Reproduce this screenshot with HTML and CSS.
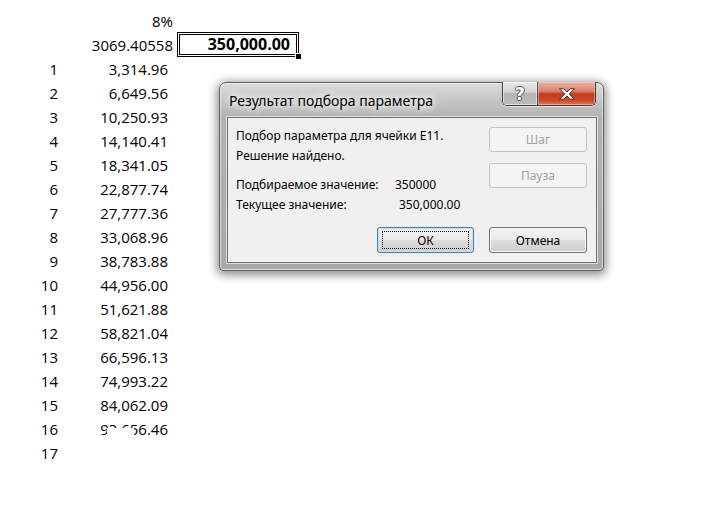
FILE: index.html
```html
<!DOCTYPE html>
<html lang="ru">
<head>
<meta charset="utf-8">
<title>Подбор параметра</title>
<link rel="stylesheet" href="styles.css">
</head>
<body>
<div class="sheet">
  <div class="row"><div class="c a"></div><div class="c b">8%</div><div class="c cc"></div></div>
  <div class="row"><div class="c a"></div><div class="c b">3069.40558</div><div class="c cc"><div class="active">350,000.00<span class="handle"></span></div></div></div>
  <div class="row"><div class="c a">1</div><div class="c b f">3,314.96</div><div class="c cc"></div></div>
  <div class="row"><div class="c a">2</div><div class="c b f">6,649.56</div><div class="c cc"></div></div>
  <div class="row"><div class="c a">3</div><div class="c b f">10,250.93</div><div class="c cc"></div></div>
  <div class="row"><div class="c a">4</div><div class="c b f">14,140.41</div><div class="c cc"></div></div>
  <div class="row"><div class="c a">5</div><div class="c b f">18,341.05</div><div class="c cc"></div></div>
  <div class="row"><div class="c a">6</div><div class="c b f">22,877.74</div><div class="c cc"></div></div>
  <div class="row"><div class="c a">7</div><div class="c b f">27,777.36</div><div class="c cc"></div></div>
  <div class="row"><div class="c a">8</div><div class="c b f">33,068.96</div><div class="c cc"></div></div>
  <div class="row"><div class="c a">9</div><div class="c b f">38,783.88</div><div class="c cc"></div></div>
  <div class="row"><div class="c a">10</div><div class="c b f">44,956.00</div><div class="c cc"></div></div>
  <div class="row"><div class="c a">11</div><div class="c b f">51,621.88</div><div class="c cc"></div></div>
  <div class="row"><div class="c a">12</div><div class="c b f">58,821.04</div><div class="c cc"></div></div>
  <div class="row"><div class="c a">13</div><div class="c b f">66,596.13</div><div class="c cc"></div></div>
  <div class="row"><div class="c a">14</div><div class="c b f">74,993.22</div><div class="c cc"></div></div>
  <div class="row"><div class="c a">15</div><div class="c b f">84,062.09</div><div class="c cc"></div></div>
  <div class="row"><div class="c a">16</div><div class="c b f glitch">93,656.46<span class="erase"></span></div><div class="c cc"></div></div>
  <div class="row"><div class="c a">17</div><div class="c b f"></div><div class="c cc"></div></div>
</div>

<div class="dialog">
  <div class="titlebar">
    <span class="title">Результат подбора параметра</span>
    <div class="capbtns">
      <span class="cap help">?</span>
      <span class="cap close">
        <svg width="18" height="12" viewBox="0 0 18 12"><path d="M1.5 0.8h4.2l3.3 3.2 3.3-3.2h4.2l-5.3 5.2 5.3 5.2h-4.2l-3.3-3.2-3.3 3.2h-4.2l5.3-5.2z" fill="#fff" stroke="#4a2a22" stroke-width="1" stroke-linejoin="round"/></svg>
      </span>
    </div>
  </div>
  <div class="client">
    <div class="info">
      <div class="line">Подбор параметра для ячейки E11.</div>
      <div class="line">Решение найдено.</div>
      <div class="line gap"><span class="lbl">Подбираемое значение:</span><span class="val">350000</span></div>
      <div class="line"><span class="lbl">Текущее значение:</span><span class="val v2">350,000.00</span></div>
    </div>
    <div class="side">
      <span class="btn disabled">Шаг</span>
      <span class="btn disabled">Пауза</span>
    </div>
    <div class="actions">
      <span class="btn default"><span class="focus">ОК</span></span>
      <span class="btn">Отмена</span>
    </div>
  </div>
</div>
</body>
</html>
```

FILE: styles.css
```css
html, body {
  margin: 0;
  padding: 0;
  background: #ffffff;
}
body {
  font-family: "Open Sans", "Liberation Sans", sans-serif;
  font-size: 15px;
  color: #000;
  width: 716px;
  height: 526px;
  overflow: hidden;
  position: relative;
}
.sheet {
  padding-top: 9px;
}
.row {
  display: grid;
  grid-template-columns: 61px 115px 123px;
  height: 24px;
  line-height: 24px;
}
.c {
  text-align: right;
  white-space: nowrap;
}
.a { padding-right: 3px; }
.b { padding-right: 3px; }
.b.f { padding-right: 8px; }
.glitch { position: relative; }
.erase {
  position: absolute;
  left: 46px;
  top: 11px;
  width: 27px;
  height: 10px;
  background: #fff;
}
.cc { position: relative; }
.active {
  box-sizing: border-box;
  margin-top: -1px;
  margin-left: 1px;
  width: 122px;
  height: 25px;
  line-height: 22px;
  border: 1px solid #000;
  box-shadow: inset 0 0 0 1px #fff, inset 0 0 0 2px #000;
  padding-right: 8px;
  font-weight: 700;
  font-size: 16px;
  position: relative;
}
.handle {
  position: absolute;
  right: -4px;
  bottom: -4px;
  width: 5px;
  height: 5px;
  background: #000;
  border: 1px solid #fff;
}

/* dialog */
.dialog {
  position: absolute;
  left: 219px;
  top: 82px;
  width: 385px;
  height: 189px;
  box-sizing: border-box;
  border: 1px solid #5e5e5e;
  border-radius: 7px 7px 4px 4px;
  background: linear-gradient(180deg, #dcdcdc 0px, #c4c4c4 18px, #b3b3b3 34px, #a8a8a8 100%);
  box-shadow: inset 0 0 0 1px rgba(255,255,255,0.55), 0 2px 10px 2px rgba(0,0,0,0.45);
  padding: 0 6px 7px 7px;
  display: flex;
  flex-direction: column;
  font-family: "Noto Sans", "Open Sans", sans-serif;
}
.titlebar {
  height: 34px;
  display: flex;
  align-items: flex-start;
  justify-content: space-between;
  flex: none;
}
.title {
  font-size: 14px;
  margin-left: 2px;
  margin-top: 8px;
  line-height: 20px;
  color: #000;
  text-shadow: 0 0 6px #fff, 0 0 10px #fff, 0 0 14px #eee;
}
.capbtns {
  display: flex;
  margin-right: 1px;
  margin-top: -1px;
  height: 23px;
  border: 1px solid #3c3c3c;
  border-top: none;
  border-radius: 0 0 5px 5px;
  overflow: hidden;
  box-shadow: 0 1px 0 rgba(255,255,255,0.6);
}
.cap {
  display: flex;
  align-items: center;
  justify-content: center;
  height: 23px;
}
.help {
  width: 34px;
  border-right: 1px solid #4a4a4a;
  background: linear-gradient(180deg, #e9e9e9 0%, #d2d2d2 45%, #b4b4b4 50%, #bcbcbc 100%);
  box-shadow: inset 0 0 0 1px rgba(255,255,255,0.55);
  font-family: "DejaVu Sans", sans-serif;
  font-weight: 700;
  font-size: 17px;
  color: #fff;
  text-shadow: 1px 0 0 #555, -1px 0 0 #555, 0 1px 0 #555, 0 -1px 0 #555;
}
.close {
  width: 57px;
  background: linear-gradient(180deg, #eab3a6 0%, #dc8068 40%, #c43a1c 52%, #c9492b 80%, #de7a5c 100%);
  box-shadow: inset 0 0 0 1px rgba(255,210,200,0.5);
}
.close svg { display: block; }

.client {
  flex: 1;
  box-sizing: border-box;
  border: 1px solid #707070;
  box-shadow: 0 0 0 1px rgba(255,255,255,0.6);
  background: #f0f0f0;
  display: grid;
  grid-template-columns: 1fr 98px;
  grid-template-rows: 1fr auto;
  padding: 8px 9px 9px 8px;
  font-size: 12px;
}
.info {
  grid-column: 1;
  grid-row: 1;
}
.line {
  line-height: 20px;
  white-space: nowrap;
}
.line.gap { margin-top: 9px; }
.lbl {
  display: inline-block;
  width: 159px;
}
.v2 { padding-left: 4px; }
.side {
  grid-column: 2;
  grid-row: 1;
  display: flex;
  flex-direction: column;
  gap: 11px;
  padding-top: 1px;
}
.actions {
  grid-column: 1 / -1;
  grid-row: 2;
  display: flex;
  justify-content: flex-end;
  gap: 15px;
}
.btn {
  box-sizing: border-box;
  width: 98px;
  height: 26px;
  display: flex;
  align-items: center;
  justify-content: center;
  border: 1px solid #707070;
  border-radius: 3px;
  background: linear-gradient(180deg, #f2f2f2 0%, #ebebeb 49%, #dddddd 50%, #cfcfcf 100%);
  box-shadow: inset 0 0 0 1px #fbfbfb;
  color: #000;
  font-size: 12px;
}
.side .btn { height: 25px; }
.btn.disabled {
  border-color: #c4c4c4;
  background: #f4f4f4;
  box-shadow: none;
  color: #a3a3a3;
}
.btn.default {
  width: 97px;
  border-color: #3c7fb1;
  box-shadow: inset 0 0 0 1px #c5e3f8;
}
.focus {
  box-sizing: border-box;
  width: 87px;
  height: 18px;
  display: flex;
  align-items: center;
  justify-content: center;
  border: 1px dotted #000;
}
```
